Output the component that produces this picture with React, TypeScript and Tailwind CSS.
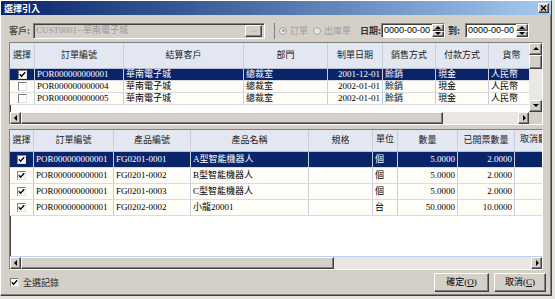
import type { ReactNode } from 'react'

const raised =
  'border border-t-white border-l-white border-r-[#404040] border-b-[#404040] shadow-[inset_-1px_-1px_0_#808080]'
const sunken =
  'border border-t-[#808080] border-l-[#808080] border-r-white border-b-white shadow-[inset_1px_1px_0_#404040]'
const cjk = { fontFamily: "'Noto Sans CJK TC', sans-serif" }

type Col = { label: string; w: number; align?: 'left' | 'right' | 'center'; head?: 'top' | 'left' }

const topCols: Col[] = [
  { label: '選擇', w: 25, align: 'center' },
  { label: '訂單編號', w: 89 },
  { label: '結算客戶', w: 120 },
  { label: '部門', w: 84 },
  { label: '制單日期', w: 55, align: 'right' },
  { label: '銷售方式', w: 53 },
  { label: '付款方式', w: 53 },
  { label: '貨幣', w: 45 },
]

const topRows = [
  { checked: true, cells: ['POR000000000001', '華南電子城', '總裁室', '2001-12-01', '賒銷', '現金', '人民幣'] },
  { checked: false, cells: ['POR000000000004', '華南電子城', '總裁室', '2002-01-01', '賒銷', '現金', '人民幣'] },
  { checked: false, cells: ['POR000000000005', '華南電子城', '總裁室', '2002-01-01', '賒銷', '現金', '人民幣'] },
]

const bottomCols: Col[] = [
  { label: '選擇', w: 24, align: 'center' },
  { label: '訂單編號', w: 80 },
  { label: '產品編號', w: 77 },
  { label: '產品名稱', w: 118 },
  { label: '規格', w: 64 },
  { label: '單位', w: 25, head: 'top' },
  { label: '數量', w: 60, align: 'right' },
  { label: '已開票數量', w: 57, align: 'right' },
  { label: '取消數量', w: 60, head: 'left' },
]

const bottomRows = [
  ['POR000000000001', 'FG0201-0001', 'A型智能機器人', '', '個', '5.0000', '2.0000', ''],
  ['POR000000000001', 'FG0201-0002', 'B型智能機器人', '', '個', '5.0000', '2.0000', ''],
  ['POR000000000001', 'FG0201-0003', 'C型智能機器人', '', '個', '5.0000', '2.0000', ''],
  ['POR000000000001', 'FG0202-0002', '小龍20001', '', '台', '50.0000', '10.0000', ''],
]

function Arrow({ dir }: { dir: 'up' | 'down' | 'left' | 'right' }) {
  const pts = {
    up: '1,5 4,2 7,5',
    down: '1,2 4,5 7,2',
    left: '5,1 2,4 5,7',
    right: '3,1 6,4 3,7',
  }[dir]
  return (
    <div className={`flex h-full w-full items-center justify-center bg-[#D4D0C8] ${raised}`}>
      <svg width="8" height="8" viewBox="0 0 8 8">
        <polygon points={pts} fill="#000" />
      </svg>
    </div>
  )
}

function CheckBox({ checked }: { checked: boolean }) {
  return (
    <div className="flex h-[9px] w-[9px] shrink-0 items-center justify-center border border-t-[#808080] border-l-[#808080] border-r-[#E0E0E0] border-b-[#E0E0E0] bg-white">
      {checked && (
        <svg width="7" height="7" viewBox="0 0 7 7">
          <polyline points="0.8,3.2 2.6,5.2 6.2,1.2" fill="none" stroke="#000" strokeWidth="1.4" />
        </svg>
      )}
    </div>
  )
}

function Cell({ w, align, children, last }: { w: number; align?: string; children?: ReactNode; last?: boolean }) {
  const a =
    align === 'right'
      ? 'items-center justify-end pr-[2px]'
      : align === 'center'
        ? 'items-center justify-center'
        : align === 'top'
          ? 'items-start justify-center pt-[5px]'
          : align === 'headleft'
            ? 'items-start justify-start pl-[5px] pt-[5px]'
            : 'items-center justify-start pl-[2px]'
  return (
    <div
      className={`flex h-full shrink-0 overflow-hidden whitespace-nowrap ${a} ${last ? '' : 'border-r border-[#C9CDD8]'}`}
      style={{ width: w }}
    >
      {children}
    </div>
  )
}

function Header({ cols, h }: { cols: Col[]; h: string }) {
  return (
    <div className={`flex ${h} shrink-0 border-b border-[#B8BECC] bg-[#E3E7F1] text-[#222]`}>
      {cols.map((c, i) => (
        <Cell
          key={c.label}
          w={c.w}
          align={c.head === 'top' ? 'top' : c.head === 'left' ? 'headleft' : 'center'}
          last={i === cols.length - 1}
        >
          {c.label}
        </Cell>
      ))}
    </div>
  )
}

function DateBox() {
  return (
    <div className={`flex h-[15px] w-[64px] shrink-0 items-center overflow-hidden bg-white pl-[2px] ${sunken}`}>
      <span className="min-w-0 flex-1 overflow-hidden whitespace-nowrap" style={{ fontFamily: "'Liberation Sans', sans-serif" }}>
        0000-00-00
      </span>
      <div className="flex h-full w-[12px] shrink-0 flex-col">
        <div className={`flex flex-1 items-center justify-center bg-[#D4D0C8] ${raised}`}>
          <svg width="6" height="3" viewBox="0 0 6 3">
            <polygon points="0,3 3,0 6,3" fill="#000" />
          </svg>
        </div>
        <div className={`flex flex-1 items-center justify-center bg-[#D4D0C8] ${raised}`}>
          <svg width="6" height="3" viewBox="0 0 6 3">
            <polygon points="0,0 3,3 6,0" fill="#000" />
          </svg>
        </div>
      </div>
    </div>
  )
}

export default function App() {
  return (
    <div
      className="h-[299px] w-[555px] overflow-hidden bg-[#E6E4DF] text-[9px] leading-none text-black"
      style={{ fontFamily: "'Liberation Serif', 'Noto Sans CJK TC', serif" }}
    >
      <div className={`flex h-[296px] w-[552px] flex-col bg-[#D4D0C8] ${raised}`}>
        {/* title bar */}
        <div className="flex h-[14px] shrink-0 items-center justify-between bg-gradient-to-r from-[#0A246A] to-[#A6CAF0] pl-[3px] pr-[2px]">
          <span className="font-bold text-white" style={cjk}>
            選擇引入
          </span>
          <div className={`flex h-[10px] w-[11px] items-center justify-center bg-[#D4D0C8] ${raised}`}>
            <svg width="7" height="6" viewBox="0 0 7 6">
              <path d="M1 0.5 L6 5.5 M6 0.5 L1 5.5" stroke="#000" strokeWidth="1.4" />
            </svg>
          </div>
        </div>

        {/* toolbar */}
        <div className="flex h-[27px] shrink-0 items-center pl-[8px] pt-[4px]">
          <span className="w-[24px] shrink-0 font-bold text-[#555]" style={cjk}>
            客戶:
          </span>
          <div className={`flex h-[16px] w-[232px] shrink-0 items-center justify-between bg-[#D4D0C8] pl-[2px] pr-[2px] ${sunken}`}>
            <span className="text-[#9A9A9A]">CUST0001--華南電子城</span>
            <div className={`flex h-[12px] w-[17px] items-end justify-center pb-[2px] text-[#9A9A9A] ${raised}`}>...</div>
          </div>
          <div className="ml-[9px] flex h-[16px] w-[78px] shrink-0 items-center gap-[3px] border-l border-[#808080] pl-[4px] text-[#A0A0A0]">
            <span className="flex h-[8px] w-[8px] items-center justify-center rounded-full border border-[#A0A0A0] bg-[#E8E6E2]">
              <span className="h-[3px] w-[3px] rounded-full bg-[#A0A0A0]" />
            </span>
            <span style={cjk}>訂單</span>
            <span className="ml-[2px] h-[8px] w-[8px] rounded-full border border-[#A0A0A0] bg-[#E8E6E2]" />
            <span style={cjk}>出庫單</span>
          </div>
          <span className="ml-[8px] w-[21px] shrink-0 font-bold text-[#333]" style={cjk}>
            日期:
          </span>
          <DateBox />
          <span className="ml-[3px] w-[17px] shrink-0 font-bold text-[#333]" style={cjk}>
            到:
          </span>
          <DateBox />
        </div>

        {/* top grid */}
        <div className={`mx-[8px] flex h-[83px] shrink-0 flex-col bg-white ${sunken}`}>
          <div className="flex min-h-0 flex-1">
            <div className="flex min-w-0 flex-1 flex-col">
              <Header cols={topCols} h="h-[26px]" />
              {topRows.map((r, i) => {
                const sel = i === 0
                return (
                  <div
                    key={i}
                    className={`flex h-[12px] shrink-0 border-b border-[#DCDCDC] ${sel ? 'bg-[#0A246A] text-white' : 'bg-[#FFFDF8]'}`}
                  >
                    <Cell w={topCols[0].w} align="center">
                      <CheckBox checked={r.checked} />
                    </Cell>
                    {r.cells.map((c, j) => (
                      <Cell key={j} w={topCols[j + 1].w} align={topCols[j + 1].align} last={j === r.cells.length - 1}>
                        {c}
                      </Cell>
                    ))}
                  </div>
                )
              })}
            </div>
            <div className="flex w-[13px] shrink-0 flex-col bg-[#E9E7E3]">
              <div className="h-[12px]">
                <Arrow dir="up" />
              </div>
              <div className={`h-[14px] bg-[#D4D0C8] ${raised}`} />
              <div className="flex-1" />
              <div className="h-[12px]">
                <Arrow dir="down" />
              </div>
            </div>
          </div>
          <div className="flex h-[12px] shrink-0">
            <div className="flex flex-1 bg-[#E9E7E3]">
              <div className="w-[11px]">
                <Arrow dir="left" />
              </div>
              <div className={`w-[422px] bg-[#D4D0C8] ${raised}`} />
              <div className="flex-1" />
              <div className="w-[11px]">
                <Arrow dir="right" />
              </div>
            </div>
            <div className="w-[13px] bg-[#D4D0C8]" />
          </div>
        </div>

        {/* bottom grid */}
        <div className={`mx-[8px] mt-[4px] flex h-[141px] shrink-0 flex-col bg-white ${sunken}`}>
          <div className="flex min-h-0 flex-1 flex-col overflow-hidden border-b border-[#BFD0EE]">
            <Header cols={bottomCols} h="h-[22px]" />
            {bottomRows.map((r, i) => {
              const sel = i === 0
              return (
                <div
                  key={i}
                  className={`flex h-[16px] shrink-0 border-b border-[#DCDCDC] ${sel ? 'bg-[#0A246A] text-white' : 'bg-[#FFFDF8]'}`}
                >
                  <Cell w={bottomCols[0].w} align="center">
                    <CheckBox checked />
                  </Cell>
                  {r.map((c, j) => (
                    <Cell key={j} w={bottomCols[j + 1].w} align={bottomCols[j + 1].align} last={j === r.length - 1}>
                      {c}
                    </Cell>
                  ))}
                </div>
              )
            })}
          </div>
          <div className="flex h-[12px] shrink-0 bg-[#E9E7E3]">
            <div className="w-[11px]">
              <Arrow dir="left" />
            </div>
            <div className={`w-[313px] bg-[#D4D0C8] ${raised}`} />
            <div className="flex-1" />
            <div className="w-[11px]">
              <Arrow dir="right" />
            </div>
          </div>
        </div>

        {/* footer */}
        <div className="flex flex-1 items-center pl-[9px] pr-[5px]">
          <CheckBox checked />
          <span className="ml-[4px] text-[#222]" style={cjk}>
            全選記錄
          </span>
          <div className="ml-auto flex gap-[5px]">
            <button type="button" className={`flex h-[19px] w-[55px] items-center justify-center bg-[#D4D0C8] ${raised}`}>
              確定(<span className="underline">O</span>)
            </button>
            <button type="button" className={`flex h-[19px] w-[52px] items-center justify-center bg-[#D4D0C8] ${raised}`}>
              取消(<span className="underline">C</span>)
            </button>
          </div>
        </div>
      </div>
    </div>
  )
}
